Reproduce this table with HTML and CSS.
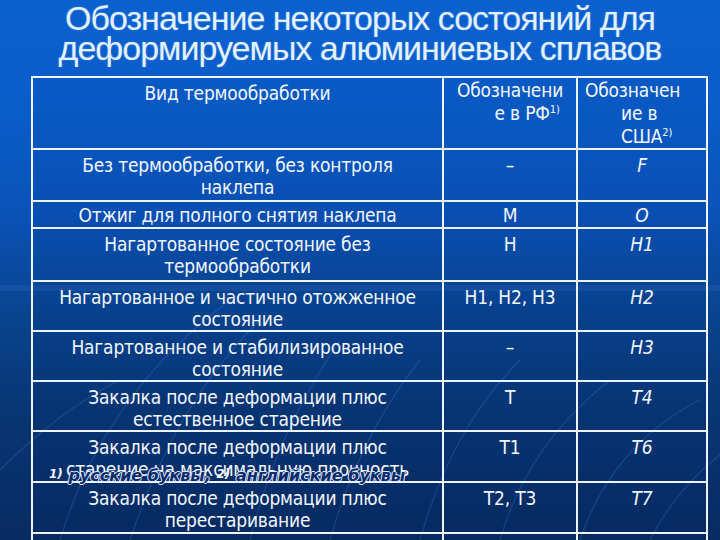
FILE: index.html
```html
<!DOCTYPE html>
<html lang="ru">
<head>
<meta charset="utf-8">
<title>Обозначение некоторых состояний</title>
<link rel="stylesheet" href="styles.css">
</head>
<body>
<div class="slide">
  <svg class="deco" width="720" height="540" viewBox="0 0 720 540" aria-hidden="true">
    <rect x="0" y="285" width="720" height="6" fill="#4a92e6" opacity="0.14"/>
    <g fill="none" stroke="#5ea2ff" stroke-width="1.3" opacity="0.2">
      <path d="M60 540 C 90 440, 150 360, 230 300"/>
      <path d="M130 540 C 160 450, 200 380, 260 320"/>
      <path d="M250 540 C 270 460, 300 400, 340 340"/>
      <path d="M330 540 C 350 470, 380 410, 420 360"/>
      <path d="M420 540 C 440 470, 470 410, 520 360"/>
      <path d="M500 540 C 520 470, 560 420, 610 380"/>
      <path d="M580 540 C 600 480, 640 430, 700 400"/>
      <path d="M0 470 C 40 430, 80 400, 120 380"/>
      <path d="M650 540 C 670 500, 700 470, 720 455"/>
    </g>
  </svg>
  <h1 class="title">Обозначение некоторых состояний для деформируемых алюминиевых сплавов</h1>
  <table class="grid">
    <colgroup>
      <col class="c1"><col class="c2"><col class="c3">
    </colgroup>
    <tr class="head">
      <td>Вид термообработки</td>
      <td class="hcell">
        <span class="ln ln-c">Обозначени</span>
        <span class="ln ln-r">е в РФ<sup>1)</sup></span>
      </td>
      <td class="hcell">
        <span class="ln ln-a">Обозначен</span>
        <span class="ln ln-b">ие в</span>
        <span class="ln ln-b">США<sup>2)</sup></span>
      </td>
    </tr>
    <tr class="r52"><td>Без термообработки, без контроля наклепа</td><td>–</td><td class="us">F</td></tr>
    <tr class="r27"><td>Отжиг для полного снятия наклепа</td><td>М</td><td class="us">O</td></tr>
    <tr class="r53"><td>Нагартованное состояние без термообработки</td><td>Н</td><td class="us">H1</td></tr>
    <tr class="r50"><td>Нагартованное и частично отожженное состояние</td><td>Н1, Н2, Н3</td><td class="us">H2</td></tr>
    <tr class="r50"><td>Нагартованное и стабилизированное состояние</td><td>–</td><td class="us">H3</td></tr>
    <tr class="r50"><td>Закалка после деформации плюс естественное старение</td><td>Т</td><td class="us">T4</td></tr>
    <tr class="r51"><td>Закалка после деформации плюс старение на максимальную прочность</td><td>Т1</td><td class="us">T6</td></tr>
    <tr class="r51"><td>Закалка после деформации плюс перестаривание</td><td>Т2, Т3</td><td class="us">T7</td></tr>
    <tr class="r51"><td></td><td></td><td></td></tr>
  </table>
  <div class="note"><span class="nn">1)</span> русские буквы, <span class="nn">2)</span> английские буквы</div>
</div>
</body>
</html>
```
FILE: styles.css
```css
html, body {
  margin: 0;
  padding: 0;
}
body {
  width: 720px;
  height: 540px;
  overflow: hidden;
  background: #0a3a80;
}
.slide {
  position: relative;
  width: 720px;
  height: 540px;
  overflow: hidden;
  background: linear-gradient(180deg, #0b60d0 0%, #0a5cc8 22%, #0a52b6 40%, #09448f 58%, #083674 76%, #072c62 100%);
  font-family: "DejaVu Sans Condensed", "DejaVu Sans", "Liberation Sans", sans-serif;
  font-stretch: condensed;
  color: #f4f8ff;
}
.deco {
  position: absolute;
  left: 0;
  top: 0;
  z-index: 0;
}
.title {
  position: relative;
  z-index: 1;
  margin: 0;
  padding: 3px 20px 0;
  height: 74px;
  box-sizing: border-box;
  text-align: center;
  font-family: "Liberation Sans", sans-serif;
  font-stretch: normal;
  font-weight: normal;
  font-size: 34px;
  letter-spacing: -1px;
  line-height: 30px;
  color: #e2f1ff;
  text-shadow: 0 0 2px rgba(200, 230, 255, 0.3);
}
.grid {
  position: relative;
  z-index: 1;
  margin-left: 31px;
  margin-top: 2px;
  width: 675px;
  table-layout: fixed;
  border-collapse: collapse;
  background: rgba(0, 20, 90, 0.05);
}
.c1 { width: 411px; }
.c2 { width: 134px; }
.c3 { width: 130px; }
.grid td {
  border: 2px solid #eef4ff;
  padding: 4px 4px 0;
  vertical-align: top;
  text-align: center;
  font-size: 19px;
  letter-spacing: -0.2px;
  line-height: 22px;
  color: #f2f7ff;
}
.grid td:first-child {
  padding-left: 13px;
  padding-right: 13px;
}
.head { height: 70px; }
.r52 { height: 52px; }
.r27 { height: 27px; }
.r53 { height: 53px; }
.r50 { height: 50px; }
.r51 { height: 51px; }
.r27 td {
  padding-top: 2px;
}
.grid td.us {
  font-style: italic;
}
.grid td.hcell {
  padding: 1px 0 0;
  line-height: 23px;
  text-align: left;
}
.ln {
  display: block;
  white-space: nowrap;
}
.ln-c {
  text-align: center;
}
.ln-r {
  text-align: right;
  padding-right: 16px;
}
.ln-a {
  padding-left: 7px;
}
.ln-b {
  padding-left: 43px;
}
sup {
  font-size: 11px;
  letter-spacing: 0;
  line-height: 0;
  vertical-align: 7px;
}
.note {
  position: absolute;
  z-index: 2;
  left: 49px;
  top: 464px;
  font-family: "DejaVu Sans", "Liberation Sans", sans-serif;
  font-stretch: normal;
  font-size: 16px;
  font-weight: bold;
  font-style: italic;
  line-height: 20px;
  color: #0b2c6c;
  text-shadow: -1px 0 0 #dfe9ff, 1px 0 0 #dfe9ff, 0 -1px 0 #dfe9ff, 0 1px 0 #dfe9ff;
  white-space: nowrap;
}
.nn {
  font-size: 12px;
  color: #f2f6ff;
  text-shadow: none;
  vertical-align: 3px;
}
```
